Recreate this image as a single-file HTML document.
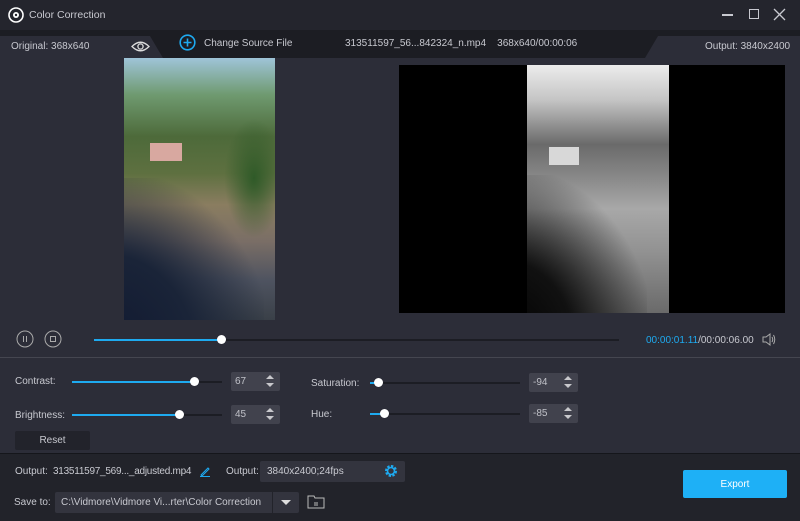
<!DOCTYPE html>
<html><head><style>
*{margin:0;padding:0;box-sizing:border-box}
body{width:800px;height:521px;background:#2c2d38;font-family:"Liberation Sans",sans-serif;font-size:10px;color:#c8c9d0;position:relative;overflow:hidden}
.a{position:absolute}
.t{white-space:nowrap}
.track{position:absolute;height:2px;background:#1c1d24}
.fill{position:absolute;height:2px;background:#1eaaf0}
.knob{position:absolute;width:9px;height:9px;border-radius:50%;background:#fff}
.num{position:absolute;width:49px;height:19px;background:#41424d;border-radius:2px;color:#c0c1c8;padding:4px 0 0 4px}
.num:after{content:"";position:absolute;right:6px;top:3px;border:4px solid transparent;border-bottom:4px solid #c8c8cc;border-top:0}
.num:before{content:"";position:absolute;right:6px;top:11px;border:4px solid transparent;border-top:4px solid #c8c8cc;border-bottom:0}
</style></head><body>
<div class="a" style="left:0;top:0;width:800px;height:30px;background:#24252d"></div>
<svg class="a" style="left:8px;top:7px" width="16" height="16" viewBox="0 0 16 16"><circle cx="8" cy="8" r="7" fill="none" stroke="#fff" stroke-width="1.6"/><circle cx="8" cy="8" r="3" fill="#fff"/><circle cx="8" cy="8" r="1.2" fill="#24252d"/></svg>
<div class="a t" style="left:29px;top:9px;color:#c8c9d0;font-size:10.5px">Color Correction</div>
<div class="a" style="left:722px;top:14px;width:11px;height:1.5px;background:#c8c9d0"></div>
<div class="a" style="left:749px;top:9px;width:10px;height:10px;border:1.3px solid #c8c9d0"></div>
<svg class="a" style="left:773px;top:8px" width="13" height="13"><path d="M1 1L12 12M12 1L1 12" stroke="#c8c9d0" stroke-width="1.3"/></svg>

<div class="a" style="left:0;top:30px;width:800px;height:28px;background:#1c1d23"></div>
<div class="a" style="left:0;top:36px;width:163px;height:22px;background:#2c2d38;clip-path:polygon(0 0,150px 0,163px 22px,0 22px)"></div>
<div class="a" style="left:645px;top:36px;width:155px;height:22px;background:#2c2d38;clip-path:polygon(13px 0,155px 0,155px 22px,0 22px)"></div>
<div class="a t" style="left:11px;top:41px">Original: 368x640</div>
<svg class="a" style="left:131px;top:40px" width="19" height="13" viewBox="0 0 19 13"><path d="M1 6.5Q9.5 -2 18 6.5Q9.5 15 1 6.5Z" fill="none" stroke="#ddd" stroke-width="1.3"/><circle cx="9.5" cy="6.5" r="2.6" fill="none" stroke="#ddd" stroke-width="1.3"/></svg>
<svg class="a" style="left:179px;top:34px" width="17" height="17"><circle cx="8.5" cy="8.5" r="7.3" fill="none" stroke="#1eaaf0" stroke-width="1.6"/><path d="M8.5 4.5V12.5M4.5 8.5H12.5" stroke="#1eaaf0" stroke-width="1.6"/></svg>
<div class="a t" style="left:204px;top:38px">Change Source File</div>
<div class="a t" style="left:345px;top:38px">313511597_56...842324_n.mp4&nbsp;&nbsp;&nbsp;&nbsp;368x640/00:00:06</div>
<div class="a t" style="left:705px;top:41px">Output: 3840x2400</div>

<div class="a" style="left:124px;top:58px;width:151px;height:262px;overflow:hidden;background:linear-gradient(180deg,#9fc4d8 0%,#6f9a70 14%,#4d6a3a 30%,#5e7040 44%,#8a7d60 56%,#7a6e66 70%,#4e5360 85%,#3a4048 100%)">
<div class="a" style="left:-60px;top:120px;width:200px;height:220px;background:radial-gradient(ellipse at 20% 80%,#101830 0%,#1a2438 40%,transparent 75%)"></div>
<div class="a" style="left:100px;top:60px;width:60px;height:120px;background:radial-gradient(ellipse,#2f5a28 0%,transparent 70%)"></div>
<div class="a" style="left:26px;top:85px;width:32px;height:18px;background:#d8a8a0"></div>
</div>
<div class="a" style="left:399px;top:65px;width:386px;height:248px;background:#000"></div>
<div class="a" style="left:527px;top:65px;width:142px;height:248px;overflow:hidden;background:linear-gradient(180deg,#ececec 0%,#c5c5c5 14%,#6a6a6a 32%,#8a8a8a 46%,#a8a8a8 58%,#929292 75%,#6a6a6a 100%)">
<div class="a" style="left:-60px;top:110px;width:180px;height:200px;background:radial-gradient(ellipse at 20% 85%,#000 0%,#111 35%,transparent 75%)"></div>
<div class="a" style="left:22px;top:82px;width:30px;height:18px;background:#d8d8d8"></div>
</div>

<svg class="a" style="left:16px;top:330px" width="48" height="18"><circle cx="9" cy="9" r="8" fill="none" stroke="#aaa" stroke-width="1"/><path d="M7.5 6V12M10.5 6V12" stroke="#aaa"/><circle cx="37" cy="9" r="8" fill="none" stroke="#aaa" stroke-width="1"/><rect x="34.5" y="6.5" width="5" height="5" fill="none" stroke="#aaa"/></svg>
<div class="track" style="left:94px;top:339px;width:525px"></div>
<div class="fill" style="left:94px;top:339px;width:127px"></div>
<div class="knob" style="left:217px;top:335px"></div>
<div class="a t" style="left:646px;top:335px;color:#1eaaf0">00:00:01.11<span style="color:#c8c9d0">/00:00:06.00</span></div>
<svg class="a" style="left:762px;top:333px" width="14" height="13"><path d="M1 4H4L8 1V12L4 9H1Z" fill="none" stroke="#aaa"/><path d="M10 4Q11.5 6.5 10 9M11.5 2Q14 6.5 11.5 11" fill="none" stroke="#aaa"/></svg>
<div class="a" style="left:0;top:357px;width:800px;height:1px;background:#454650"></div>

<div class="a t" style="left:15px;top:376px">Contrast:</div>
<div class="track" style="left:72px;top:381px;width:150px"></div><div class="fill" style="left:72px;top:381px;width:122px"></div><div class="knob" style="left:190px;top:377px"></div>
<div class="num" style="left:231px;top:372px">67</div>
<div class="a t" style="left:15px;top:410px">Brightness:</div>
<div class="track" style="left:72px;top:414px;width:150px"></div><div class="fill" style="left:72px;top:414px;width:107px"></div><div class="knob" style="left:175px;top:410px"></div>
<div class="num" style="left:231px;top:405px">45</div>
<div class="a t" style="left:311px;top:378px">Saturation:</div>
<div class="track" style="left:370px;top:382px;width:150px"></div><div class="fill" style="left:370px;top:382px;width:8px"></div><div class="knob" style="left:374px;top:378px"></div>
<div class="num" style="left:529px;top:373px">-94</div>
<div class="a t" style="left:311px;top:409px">Hue:</div>
<div class="track" style="left:370px;top:413px;width:150px"></div><div class="fill" style="left:370px;top:413px;width:14px"></div><div class="knob" style="left:380px;top:409px"></div>
<div class="num" style="left:529px;top:404px">-85</div>
<div class="a t" style="left:15px;top:431px;width:75px;height:19px;background:#22232b;border-radius:2px;text-align:center;padding-top:4px">Reset</div>

<div class="a" style="left:0;top:453px;width:800px;height:68px;background:#22232a;border-top:1px solid #15161b"></div>
<div class="a t" style="left:15px;top:466px">Output:</div>
<div class="a t" style="left:53px;top:466px;letter-spacing:-0.25px">313511597_569..._adjusted.mp4</div>
<svg class="a" style="left:199px;top:465px" width="12" height="12"><path d="M2 10L9 3L10 4L3 11Z M1 11.5H11" fill="none" stroke="#1eaaf0"/></svg>
<div class="a t" style="left:226px;top:466px">Output:</div>
<div class="a t" style="left:260px;top:461px;width:145px;height:21px;background:#33343e;border-radius:2px;padding:5px 0 0 7px">3840x2400;24fps</div>
<svg class="a" style="left:384px;top:464px" width="14" height="14" viewBox="0 0 14 14"><circle cx="7" cy="7" r="4.5" fill="none" stroke="#1eaaf0" stroke-width="3" stroke-dasharray="2.2 1.3"/><circle cx="7" cy="7" r="3.5" fill="none" stroke="#1eaaf0" stroke-width="1.6"/></svg>
<div class="a t" style="left:14px;top:497px">Save to:</div>
<div class="a t" style="left:55px;top:492px;width:244px;height:21px;background:#33343e;border-radius:2px;padding:5px 0 0 6px">C:\Vidmore\Vidmore Vi...rter\Color Correction</div>
<div class="a" style="left:272px;top:492px;width:1px;height:21px;background:#22232a"></div>
<div class="a" style="left:281px;top:500px;border:5px solid transparent;border-top:5px solid #ddd;border-bottom:0"></div>
<svg class="a" style="left:307px;top:494px" width="18" height="15"><path d="M1 2H7L8 4H17V14H1Z" fill="none" stroke="#bbb"/><path d="M7 9H11M7 11H11" stroke="#bbb"/></svg>
<div class="a t" style="left:683px;top:470px;width:104px;height:28px;background:#1eb0f6;border-radius:2px;color:#fff;text-align:center;padding-top:9px">Export</div>
</body></html>
